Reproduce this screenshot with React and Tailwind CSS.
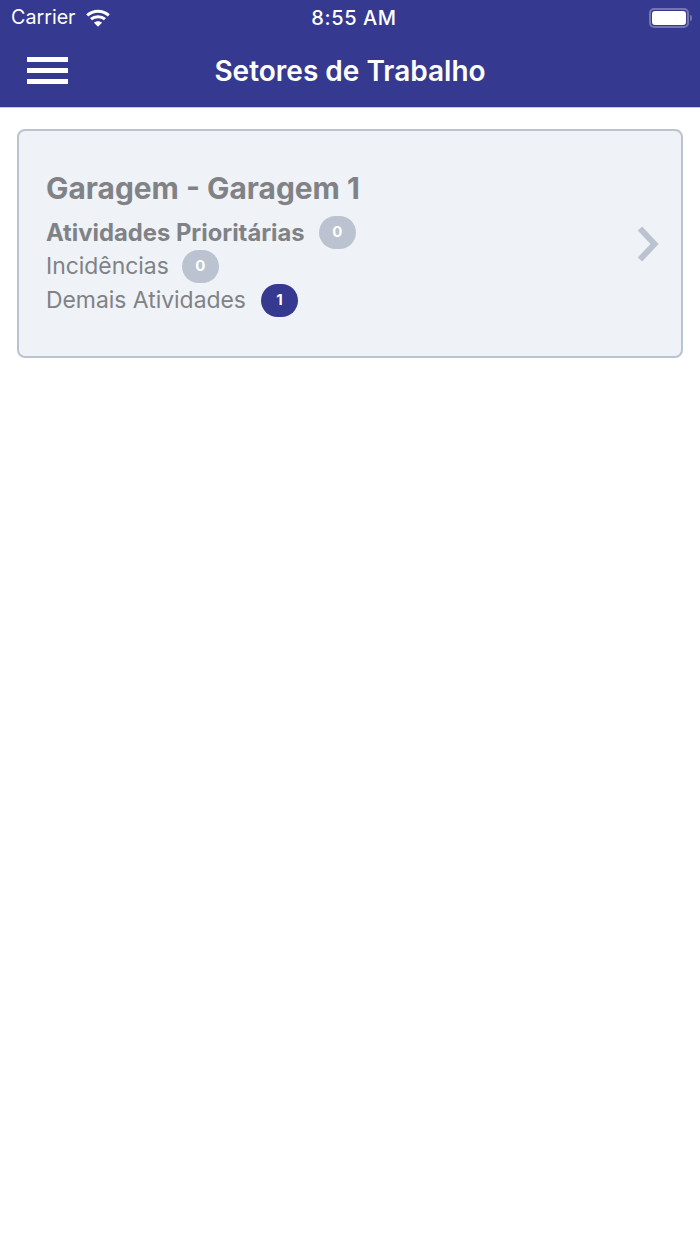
import React from 'react';

const font = 'font-["Inter","Liberation_Sans",sans-serif]';

const Wifi = () => (
  <svg width="24" height="18" viewBox="0 0 24 18" fill="none" stroke="white" strokeWidth="3">
    <path d="M1.2 6.4C7.2 0.8 16.8 0.8 22.8 6.4" />
    <path d="M5 10.2C8.9 6.8 15.1 6.8 19 10.2" />
    <path d="M12 17.8L8 13.8C10.2 11.8 13.8 11.8 16 13.8Z" fill="white" stroke="none" />
  </svg>
);

const Battery = () => (
  <div className="flex items-center">
    <div className="w-[40px] h-[20px] rounded-[5px] border-2 border-[#7377ae] p-[1px]">
      <div className="w-full h-full rounded-[3px] bg-white" />
    </div>
    <div className="w-[2px] h-[6px] ml-[1px] rounded-r-sm bg-[#7377ae]" />
  </div>
);

const Linha = ({ texto, valor, negrito, ativo, margem = 'ml-[14px]' }) => (
  <div className="flex items-center h-[34px]">
    <span className={`text-[#808285] ${negrito ? 'text-[23.8px] font-bold' : 'text-[22.9px] font-normal'}`}>{texto}</span>
    <span className={`${margem} w-[37px] h-[33px] rounded-full flex items-center justify-center text-[15px] font-bold text-white ${ativo ? 'bg-[#35398f]' : 'bg-[#bcc3d0]'}`}>
      {valor}
    </span>
  </div>
);

export default function App() {
  return (
    <div className={`min-h-[1244px] bg-white ${font}`}>
      <div className="bg-[#35398f] h-[108px] border-b border-[#c8c9d8]">
        <div className="h-[36px] pl-[11px] pr-[8px] flex items-center justify-between relative text-white">
          <div className="flex items-center gap-[10px]">
            <span className="text-[19.7px]">Carrier</span>
            <Wifi />
          </div>
          <span className="absolute left-0 right-0 text-center text-[20px] font-medium tracking-[0.6px] pl-[8px]">8:55 AM</span>
          <Battery />
        </div>
        <div className="h-[71px] flex items-center relative">
          <div className="ml-[27px] w-[41px] flex flex-col gap-[6px] mb-[2px]">
            <div className="h-[5px] bg-white" />
            <div className="h-[5px] bg-white" />
            <div className="h-[5px] bg-white" />
          </div>
          <h1 className="absolute left-0 right-0 text-center text-[28px] font-semibold text-white mt-[-2px]">Setores de Trabalho</h1>
        </div>
      </div>

      <div className="px-[17px] pt-[21px]">
        <div className="h-[229px] rounded-[8px] border-2 border-[#bcc3d0] bg-[#eff2f7] pl-[27px] pr-[21px] flex items-center justify-between">
          <div>
            <h2 className="text-[29.9px] font-bold text-[#808285] leading-[36px] mb-[10px]">Garagem - Garagem 1</h2>
            <Linha texto="Atividades Prioritárias" valor="0" negrito />
            <Linha texto="Incidências" valor="0" margem="ml-[13px]" />
            <Linha texto="Demais Atividades" valor="1" ativo margem="ml-[15px]" />
          </div>
          <svg width="24" height="36" viewBox="0 0 24 36" fill="none" stroke="#bcc3d0" strokeWidth="6">
            <path d="M4 2.5L18.5 18L4 33.5" />
          </svg>
        </div>
      </div>
    </div>
  );
}
